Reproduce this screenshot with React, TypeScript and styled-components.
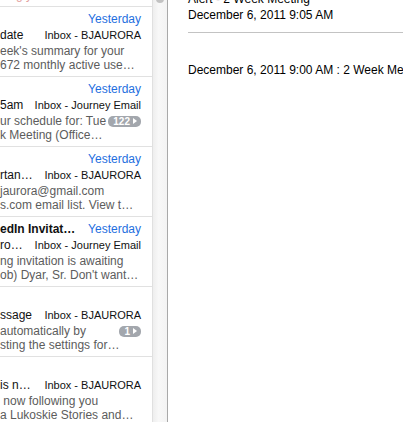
import styled, { createGlobalStyle } from 'styled-components'

const GlobalStyle = createGlobalStyle`
  html, body {
    margin: 0;
    padding: 0;
    background: #fff;
  }
  body {
    font-family: 'Liberation Sans', Arial, Helvetica, sans-serif;
    -webkit-font-smoothing: antialiased;
  }
`

const Window = styled.div`
  display: flex;
  width: 403px;
  height: 422px;
  overflow: hidden;
  background: #fff;
`

const MessageList = styled.div`
  width: 152px;
  flex-shrink: 0;
  overflow: hidden;
  display: flex;
  flex-direction: column;
`

const ListScroll = styled.div`
  margin-top: -64px;
  display: flex;
  flex-direction: column;
`

const Row = styled.div`
  box-sizing: border-box;
  height: 70px;
  flex-shrink: 0;
  border-top: 1px solid #e1e1e1;
  padding: 4px 11px 0 0;
  display: flex;
  flex-direction: column;
`

const Line = styled.div`
  display: flex;
  align-items: baseline;
  height: 16px;
  line-height: 16px;
  white-space: nowrap;
`

const Sender = styled.span`
  flex: 1;
  min-width: 0;
  overflow: hidden;
  font-size: 12px;
  font-weight: bold;
  color: #111;
`

const DateLabel = styled.span`
  margin-left: auto;
  flex-shrink: 0;
  font-size: 12px;
  color: #1f6fe0;
`

const Subject = styled.span`
  flex: 1;
  min-width: 0;
  overflow: hidden;
  font-size: 12px;
  color: #111;
`

const Mailbox = styled.span`
  flex-shrink: 0;
  margin-left: 10px;
  font-size: 11px;
  color: #111;
`

const Preview = styled.div`
  margin-top: 1px;
  display: flex;
  flex-direction: column;
`

const PreviewLine = styled.div<{ $tint?: string }>`
  display: flex;
  align-items: center;
  height: 14px;
  line-height: 14px;
  font-size: 12px;
  white-space: nowrap;
  overflow: hidden;
  color: ${p => p.$tint ?? '#5c5c5c'};
`

const PreviewText = styled.span`
  flex: 1;
  min-width: 0;
  overflow: hidden;
`

const Badge = styled.span`
  flex-shrink: 0;
  display: inline-flex;
  align-items: center;
  gap: 3px;
  height: 11px;
  padding: 0 4px 0 5px;
  border-radius: 5px;
  background: #a3a7ad;
  color: #fff;
  font-size: 10px;
  font-weight: bold;
  line-height: 11px;
`

const BadgeArrow = styled.span`
  width: 0;
  height: 0;
  border-top: 3px solid transparent;
  border-bottom: 3px solid transparent;
  border-left: 4px solid #fff;
`

const Scrollbar = styled.div`
  width: 14px;
  flex-shrink: 0;
  border-left: 1px solid #e0e0e0;
  border-right: 1px solid #a9a9a9;
  background: linear-gradient(to right, #eeeeee, #f8f8f8 40%, #f3f3f3);
  display: flex;
  justify-content: center;
`

const Thumb = styled.div`
  width: 8px;
  height: 8px;
  margin-top: -5px;
  border-radius: 4px;
  background: #c2c2c2;
`

const Reader = styled.div`
  flex: 1;
  min-width: 0;
  padding-left: 20px;
  font-size: 12px;
  color: #000;
  white-space: nowrap;
  overflow: hidden;
`

const HeaderLine = styled.div`
  height: 16px;
  line-height: 16px;
  &:first-child {
    margin-top: -9px;
  }
`

const Rule = styled.div`
  margin-top: 9px;
  height: 1px;
  background: #c3c3c3;
`

const Body = styled.div`
  margin-top: 29px;
  line-height: 16px;
`

type Message = {
  sender: string
  date: string
  subject: string
  mailbox: string
  preview: [string, string]
  badge?: string
  tint?: string
}

const MESSAGES: Message[] = [
  {
    sender: '',
    date: '',
    subject: '',
    mailbox: '',
    preview: ['', ' ning your reminder for this event tomorrow'],
    tint: '#e3a0a0',
  },
  {
    sender: '',
    date: 'Yesterday',
    subject: 'date',
    mailbox: 'Inbox - BJAURORA',
    preview: ["eek's summary for your", '672 monthly active use…'],
  },
  {
    sender: '',
    date: 'Yesterday',
    subject: '5am',
    mailbox: 'Inbox - Journey Email',
    preview: ['ur schedule for: Tue', 'k Meeting (Office…'],
    badge: '122',
  },
  {
    sender: '',
    date: 'Yesterday',
    subject: 'rtan…',
    mailbox: 'Inbox - BJAURORA',
    preview: ['jaurora@gmail.com', 's.com email list. View t…'],
  },
  {
    sender: 'edIn Invitat…',
    date: 'Yesterday',
    subject: 'ro…',
    mailbox: 'Inbox - Journey Email',
    preview: ['ng invitation is awaiting', "ob) Dyar, Sr. Don't want…"],
  },
  {
    sender: '',
    date: '',
    subject: 'ssage',
    mailbox: 'Inbox - BJAURORA',
    preview: ['automatically by', 'sting the settings for…'],
    badge: '1',
  },
  {
    sender: '',
    date: '',
    subject: 'is n…',
    mailbox: 'Inbox - BJAURORA',
    preview: ['\u00a0now following you', 'a Lukoskie Stories and…'],
  },
]

function MessageRow({ m }: { m: Message }) {
  return (
    <Row>
      <Line>
        <Sender>{m.sender}</Sender>
        {m.date && <DateLabel>{m.date}</DateLabel>}
      </Line>
      <Line>
        <Subject>{m.subject}</Subject>
        {m.mailbox && <Mailbox>{m.mailbox}</Mailbox>}
      </Line>
      <Preview>
        <PreviewLine $tint={m.tint}>
          <PreviewText>{m.preview[0]}</PreviewText>
          {m.badge && (
            <Badge>
              {m.badge}
              <BadgeArrow />
            </Badge>
          )}
        </PreviewLine>
        <PreviewLine $tint={m.tint}>
          <PreviewText>{m.preview[1]}</PreviewText>
        </PreviewLine>
      </Preview>
    </Row>
  )
}

export default function App() {
  return (
    <>
      <GlobalStyle />
      <Window>
        <MessageList>
          <ListScroll>
            {MESSAGES.map((m, i) => (
              <MessageRow key={i} m={m} />
            ))}
          </ListScroll>
        </MessageList>
        <Scrollbar>
          <Thumb />
        </Scrollbar>
        <Reader>
          <HeaderLine>Alert - 2 Week Meeting</HeaderLine>
          <HeaderLine>December 6, 2011 9:05 AM</HeaderLine>
          <Rule />
          <Body>December 6, 2011 9:00 AM : 2 Week Meeting</Body>
        </Reader>
      </Window>
    </>
  )
}
